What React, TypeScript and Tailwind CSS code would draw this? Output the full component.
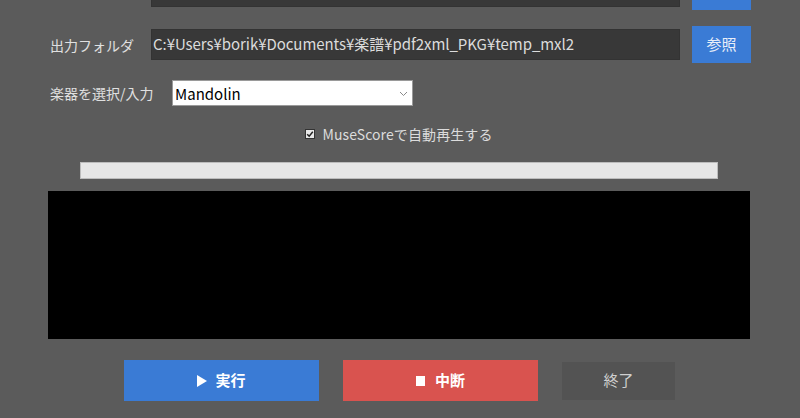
import React from "react";

const font = { fontFamily: '"Noto Sans CJK JP", "Noto Sans", sans-serif' };

export default function App() {
  return (
    <div className="w-[800px] h-[418px] overflow-hidden bg-[#5b5b5b] text-[#dedede]" style={font}>
      {/* Row 1 (cut off) */}
      <div className="flex items-center mt-[-27px] pl-[50px] h-[37px]">
        <div className="w-[101px]" />
        <div className="w-[529px] h-[31px] bg-[#383838] border border-[#333]" />
        <div className="ml-[12px] w-[59px] h-[37px] bg-[#3a7bd5]" />
      </div>
      {/* Row 2 */}
      <div className="flex items-center mt-[16px] pl-[50px] h-[37px]">
        <div className="w-[101px] text-[14px] leading-none text-[#e0e0e0]">出力フォルダ</div>
        <div className="w-[529px] h-[31px] bg-[#383838] border border-[#333] flex items-center pl-[1px] text-[15px] text-[#dcdcdc] tracking-[-0.05px] whitespace-nowrap overflow-hidden">
          C:¥Users¥borik¥Documents¥楽譜¥pdf2xml_PKG¥temp_mxl2
        </div>
        <div className="ml-[12px] w-[59px] h-[37px] bg-[#3a7bd5] flex items-center justify-center text-[15px] text-[#e8eef8]">
          参照
        </div>
      </div>
      {/* Row 3 */}
      <div className="flex items-center mt-[17px] pl-[50px] h-[26px]">
        <div className="w-[122px] text-[14px] leading-none text-[#e0e0e0]">楽器を選択/入力</div>
        <div className="w-[241px] h-[26px] bg-white border border-[#9a9a9a] flex items-center justify-between pl-[2px] pr-[4px]">
          <span className="text-[15px] text-black leading-none">Mandolin</span>
          <svg width="9" height="6" viewBox="0 0 9 6" className="mt-[2px]">
            <path d="M1 1 L4.5 4.5 L8 1" fill="none" stroke="#8a8a8a" strokeWidth="1" />
          </svg>
        </div>
      </div>
      {/* Checkbox */}
      <div className="flex items-center justify-center mt-[18px] h-[20px] pr-[2px]">
        <div className="w-[10px] h-[10px] bg-[#e8e8e8] border border-[#333] flex items-center justify-center">
          <svg width="8" height="8" viewBox="0 0 8 8">
            <path d="M1.2 4.2 L3.2 6.2 L6.8 1.8" fill="none" stroke="#222" strokeWidth="1.5" />
          </svg>
        </div>
        <span className="ml-[7px] text-[14px] leading-none text-[#dcdcdc] tracking-[0.1px]">MuseScoreで自動再生する</span>
      </div>
      {/* Progress bar */}
      <div className="flex justify-center mt-[18px] pr-[2px]">
        <div className="w-[638px] h-[17px] bg-[#e6e6e6] border border-[#bcbcbc]" />
      </div>
      {/* Output panel */}
      <div className="mt-[12px] ml-[48px] w-[702px] h-[148px] bg-black" />
      {/* Buttons */}
      <div className="flex items-center mt-[21px] pl-[124px] h-[41px]">
        <div className="w-[195px] h-[41px] bg-[#3a7bd5] flex items-center justify-center text-white text-[15px] font-bold">
          <svg width="10" height="12" viewBox="0 0 10 12" className="mr-[8px]">
            <path d="M0 0 L10 6 L0 12 Z" fill="white" />
          </svg>
          実行
        </div>
        <div className="ml-[24px] w-[195px] h-[41px] bg-[#d9534f] flex items-center justify-center text-white text-[15px] font-bold">
          <div className="w-[9px] h-[10px] bg-white mr-[10px]" />
          中断
        </div>
        <div className="ml-[24px] w-[113px] h-[38px] bg-[#535353] flex items-center justify-center text-[#cfcfcf] text-[15px]">
          終了
        </div>
      </div>
    </div>
  );
}
